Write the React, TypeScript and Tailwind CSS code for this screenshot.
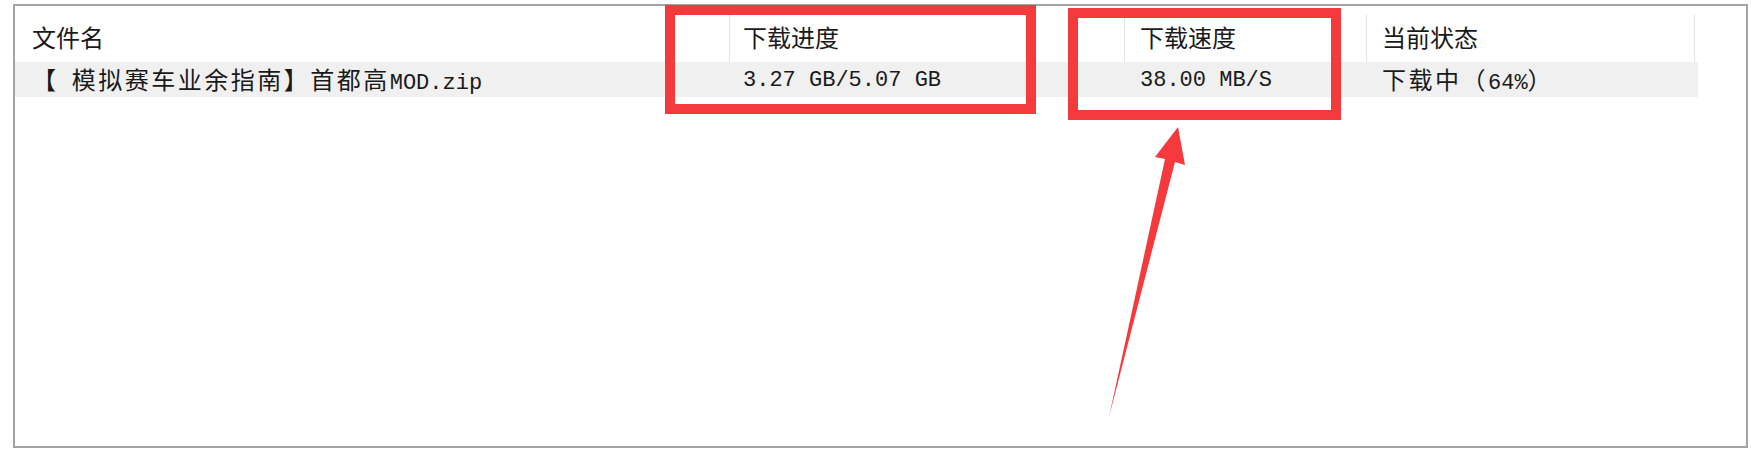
import React from 'react';

interface Column {
  title: string;
  value: string;
  width: string;
  pad: string;
}

const columns: Column[] = [
  { title: '文件名', value: '【 模拟赛车业余指南】首都高MOD.zip', width: 'w-[715px]', pad: 'pl-[17px]' },
  { title: '下载进度', value: '3.27 GB/5.07 GB', width: 'w-[395px]', pad: 'pl-[13px]' },
  { title: '下载速度', value: '38.00 MB/S', width: 'w-[242px]', pad: 'pl-[15px]' },
  { title: '当前状态', value: '下载中（64%）', width: 'w-[328px]', pad: 'pl-[15px]' },
];

const wide = /[\u3000-\u9fff\uff00-\uffef]/;

// SimSun-like mix: CJK runs are double width, ascii runs are monospaced
function MixedText({ text }: { text: string }) {
  const parts = text.split(/([\u3000-\u9fff\uff00-\uffef]+)/).filter(Boolean);
  return (
    <span className="whitespace-pre text-[#1a1a1a]">
      {parts.map((p, i) =>
        wide.test(p) ? (
          <span key={i} className="font-['Noto_Sans_CJK_SC',sans-serif] text-[24px] tracking-[2.5px]">
            {p}
          </span>
        ) : (
          <span key={i} className="font-['Liberation_Mono','Noto_Sans_CJK_SC',monospace] text-[22px]">
            {p}
          </span>
        )
      )}
    </span>
  );
}

function Arrow() {
  return (
    <svg className="absolute left-0 top-0" width="1751" height="455" viewBox="0 0 1751 455">
      <polygon
        points="1178,127 1185,165 1175,162 1109,417 1165,159 1155,157"
        fill="#f43a3c"
      />
    </svg>
  );
}

export default function App() {
  return (
    <div className="relative w-[1751px] h-[455px] bg-white overflow-hidden font-['Noto_Sans_CJK_SC',sans-serif]">
      <div className="ml-[13px] mt-[4px] w-[1735px] h-[444px] border-2 border-[#a3a3a3]">
        <div className="flex h-[56px] pt-[9px]">
          {columns.map((c) => (
            <div
              key={c.title}
              className={`${c.width} ${c.pad} h-[47px] flex items-center pb-[4px] border-r border-[#e4e4e4] text-[24px] text-[#1a1a1a] leading-none`}
            >
              {c.title}
            </div>
          ))}
        </div>
        <div className="flex h-[35px] bg-[#f0f0f0] w-[1683px]">
          {columns.map((c) => (
            <div key={c.title} className={`${c.width} ${c.pad} flex items-center pt-[3px] leading-none`}>
              <MixedText text={c.value} />
            </div>
          ))}
        </div>
      </div>

      <div className="absolute left-[665px] top-[5px] w-[371px] h-[109px] border-[10px] border-[#f43a3c]" />
      <div className="absolute left-[1068px] top-[8px] w-[273px] h-[112px] border-[10px] border-[#f43a3c]" />
      <Arrow />
    </div>
  );
}
